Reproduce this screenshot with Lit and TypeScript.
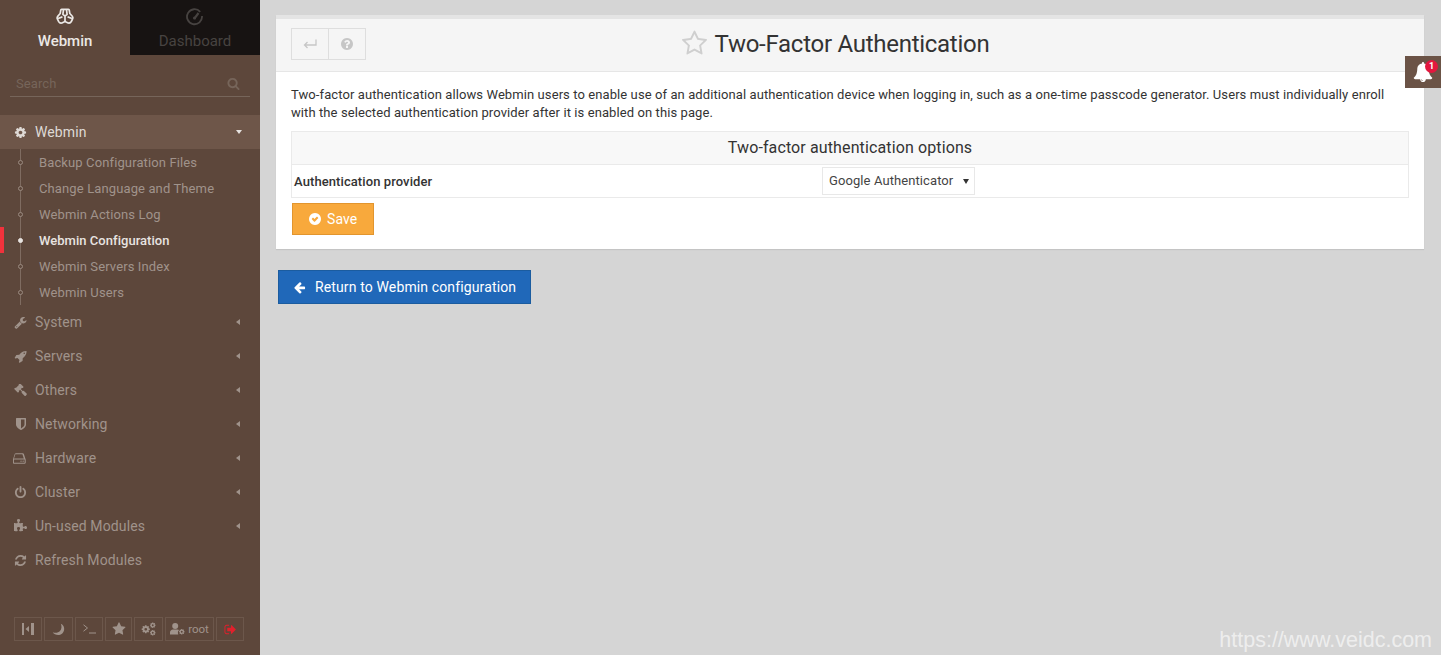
import { LitElement, html, css, svg } from "lit";
import { customElement } from "lit/decorators.js";

const P: Record<string, string> = {
  cog: "M1152 896q0-106-75-181t-181-75-181 75-75 181 75 181 181 75 181-75 75-181zm512-109v222q0 12-8 23t-20 13l-185 28q-19 54-39 91 35 50 107 138 10 12 10 25t-9 23q-27 37-99 108t-94 71q-12 0-26-9l-138-108q-44 23-91 38-16 136-29 186-7 28-36 28h-222q-14 0-24.500-8.500t-11.500-21.500l-28-184q-49-16-90-37l-141 107q-10 9-25 9-14 0-25-11-126-114-165-168-7-10-7-23 0-12 8-23 15-21 51-66.500t54-70.500q-27-50-41-99l-183-27q-13-2-21-12.500t-8-23.500v-222q0-12 8-23t19-13l186-28q14-46 39-92-40-57-107-138-10-12-10-24 0-10 9-23 26-36 98.500-107.500t94.500-71.500q13 0 26 10l138 107q44-23 91-38 16-136 29-186 7-28 36-28h222q14 0 24.500 8.500t11.500 21.500l28 184q49 16 90 37l142-107q9-9 24-9 13 0 25 10 129 119 165 170 7 8 7 22 0 12-8 23-15 21-51 66.500t-54 70.500q26 50 41 98l183 28q13 2 21 12.500t8 23.500z",
  wrench: "M448 1472q0-26-19-45t-45-19-45 19-19 45 19 45 45 19 45-19 19-45zm644-420l-682 682q-37 37-90 37-52 0-91-37l-106-108q-38-36-38-90 0-53 38-91l681-681q39 98 114.500 173.500t173.500 114.500zm634-435q0 39-23 106-47 134-164.500 217.500t-258.500 83.500q-185 0-316.500-131.500t-131.500-316.500 131.500-316.500 316.500-131.500q58 0 121.500 16.500t107.500 46.500q16 11 16 28t-16 28l-293 169v224l193 107q5-3 79-48.500t135.500-81 70.500-35.500q15 0 23.500 10t8.500 25z",
  rocket: "M1504 448q0-40-28-68t-68-28-68 28-28 68 28 68 68 28 68-28 28-68zm224-288q0 249-75.500 430.500t-253.500 360.500q-81 80-195 176l-20 379q-2 16-16 26l-384 224q-7 4-16 4-12 0-23-9l-64-64q-13-14-8-32l85-276-281-281-276 85q-3 1-9 1-14 0-23-9l-64-64q-17-19-5-39l224-384q10-14 26-16l379-20q96-114 176-195 188-187 358-258t431-71q14 0 24 9.500t10 22.500z",
  gavel: "M1771 1408q0 53-37 90l-107 108q-39 37-91 37-53 0-90-37l-363-364q-38-36-38-90 0-53 43-96l-256-256-126 126q-14 14-34 14t-34-14q2 2 12.500 12t12.500 13 10 11.500 10 13.500 6 13.500 5.500 16.500 1.500 18q0 38-28 68-3 3-16.500 18t-19 20.500-18.500 16.500-22 15.500-22 9-26 4.500q-40 0-68-28l-408-408q-28-28-28-68 0-13 4.500-26t9-22 15.500-22 16.500-18.500 20.500-19 18-16.500q30-28 68-28 10 0 18 1.500t16.500 5.500 13.500 6 13.500 10 11.500 10 13 12.500 12 12.500q-14-14-14-34t14-34l348-348q14-14 34-14t34 14q-2-2-12.500-12t-12.500-13-10-11.500-10-13.500-6-13.500-5.500-16.500-1.500-18q0-38 28-68 3-3 16.500-18t19-20.500 18.500-16.500 22-15.500 22-9 26-4.500q40 0 68 28l408 408q28 28 28 68 0 13-4.500 26t-9 22-15.500 22-16.500 18.500-20.500 19-18 16.500q-30 28-68 28-10 0-18-1.500t-16.500-5.500-13.500-6-13.500-10-11.500-10-13-12.500-12-12.500q14 14 14 34t-14 34l-126 126 256 256q43-43 96-43 52 0 91 37l363 363q37 39 37 91z",
  shield: "M1344 960v-640h-448v1137q119-63 213-137 235-184 235-360zm192-768v768q0 86-33.500 170.500t-83 150-118 127.500-126.500 103-121 77.500-89.500 49.500-42.500 20q-12 6-26 6t-26-6q-16-7-42.500-20t-89.500-49.500-121-77.500-126.500-103-118-127.500-83-150-33.500-170.500v-768q0-26 19-45t45-19h1152q26 0 45 19t19 45z",
  hdd: "M1040 1216q0 33-23.500 56.500t-56.500 23.500-56.500-23.500-23.500-56.500 23.500-56.500 56.500-23.500 56.500 23.500 23.500 56.500zm256 0q0 33-23.500 56.500t-56.500 23.500-56.500-23.500-23.500-56.500 23.500-56.500 56.500-23.500 56.500 23.500 23.500 56.500zm96 160v-320q0-13-9.500-22.500t-22.500-9.500h-1216q-13 0-22.500 9.500t-9.500 22.500v320q0 13 9.500 22.500t22.500 9.500h1216q13 0 22.500-9.500t9.500-22.500zm-1280-479h1180l-157-482q-4-13-16-21.500t-26-8.500h-782q-14 0-26 8.500t-16 21.500zm1408 159v320q0 66-47 113t-113 47h-1216q-66 0-113-47t-47-113v-320q0-25 16-75l197-606q17-53 63-86t101-33h782q55 0 101 33t63 86l197 606q16 50 16 75z",
  power: "M1664 896q0 156-61 298t-164 245-245 164-298 61-298-61-245-164-164-245-61-298q0-182 80.500-343t226.500-270q43-32 95.500-25t83.500 50q32 42 24.500 94.500t-49.500 84.500q-98 74-151.500 181t-53.500 228q0 104 40.500 198.500t109.500 163.500 163.500 109.500 198.500 40.500 198.500-40.500 163.500-109.500 109.500-163.500 40.500-198.500q0-121-53.500-228t-151.500-181q-42-32-49.500-84.500t24.500-94.500q31-43 84-50t95 25q146 109 226.500 270t80.500 343zm-640-768v640q0 52-38 90t-90 38-90-38-38-90v-640q0-52 38-90t90-38 90 38 38 90z",
  puzzle: "M1664 1098q0 81-44.500 135t-123.500 54q-41 0-77.500-17.500t-59-38-56.500-38-71-17.500q-110 0-110 124 0 39 16 115t15 115v5q-22 0-33 1-34 3-97.500 11.500t-115.500 13.500-98 5q-61 0-103-26.500t-42-83.500q0-37 17.500-71t38-56.500 38-59 17.500-77.500q0-79-54-123.500t-135-44.500q-84 0-143 45.500t-59 127.500q0 43 15 83t33.500 64.500 33.500 53 15 50.500q0 45-46 89-37 35-117 35-95 0-245-24-9-2-27.500-4t-27.500-4l-13-2q-1 0-3-1-2 0-2-1v-1024q2 1 17.500 3.500t34 5 21.500 3.500q150 24 245 24 80 0 117-35 46-44 46-89 0-22-15-50.500t-33.500-53-33.500-64.500-15-83q0-82 59-127.500t144-45.500q80 0 134 44.500t54 123.500q0 41-17.500 77.500t-38 59-38 56.500-17.500 71q0 57 42 83.500t103 26.500q64 0 180-15t163-17v2q-1 2-3.500 17.500t-5 34-3.500 21.500q-24 150-24 245 0 80 35 117 44 46 89 46 22 0 50.500-15t53-33.500 64.500-33.500 83-15q82 0 127.500 59t45.500 143z",
  refresh: "M1639 1056q0 5-1 7-64 268-268 434.500t-478 166.500q-146 0-282.500-55t-243.500-157l-129 129q-19 19-45 19t-45-19-19-45v-448q0-26 19-45t45-19h448q26 0 45 19t19 45-19 45l-137 137q71 66 161 102t187 36q134 0 250-65t186-179q11-17 53-117 8-23 30-23h192q13 0 22.500 9.500t9.500 22.500zm25-800v448q0 26-19 45t-45 19h-448q-26 0-45-19t-19-45 19-45l138-138q-148-137-349-137-134 0-250 65t-186 179q-11 17-53 117-8 23-30 23h-199q-13 0-22.500-9.500t-9.500-22.500v-7q65-268 270-434.500t480-166.500q146 0 284 55.500t245 156.500l130-129q19-19 45-19t45 19 19 45z",
  star: "M1728 647q0 22-26 48l-363 354 86 500q1 7 1 20 0 21-10.500 35.500t-30.500 14.500q-19 0-40-12l-449-236-449 236q-22 12-40 12-21 0-31.500-14.500t-10.500-35.500q0-6 2-20l86-500-364-354q-25-27-25-48 0-37 56-46l502-73 225-455q19-41 49-41t49 41l225 455 502 73q56 9 56 46z",
  starO: "M1201 1004l306-297-422-62-189-382-189 382-422 62 306 297-73 421 378-199 377 199zm527-357q0 22-26 48l-363 354 86 500q1 7 1 20 0 50-41 50-19 0-40-12l-449-236-449 236q-22 12-40 12-21 0-31.500-14.500t-10.500-35.500q0-6 2-20l86-500-364-354q-25-27-25-48 0-37 56-46l502-73 225-455q19-41 49-41t49 41l225 455 502 73q56 9 56 46z",
  search: "M1216 832q0-185-131.500-316.500t-316.500-131.500-316.500 131.500-131.500 316.500 131.500 316.500 316.500 131.500 316.500-131.500 131.500-316.500zm512 832q0 52-38 90t-90 38q-54 0-90-38l-343-342q-179 124-399 124-143 0-273.500-55.500t-225-150-150-225-55.500-273.500 55.500-273.500 150-225 225-150 273.500-55.500 273.500 55.500 225 150 150 225 55.500 273.500q0 220-124 399l343 343q37 37 37 90z",
  question: "M1024 1376v-192q0-14-9-23t-23-9h-192q-14 0-23 9t-9 23v192q0 14 9 23t23 9h192q14 0 23-9t9-23zm256-672q0-88-55.500-163t-138.500-116-170-41q-243 0-371 213-15 24 8 42l132 100q7 6 19 6 16 0 25-12 53-68 86-92 34-24 86-24 48 0 85.500 26t37.500 59q0 38-20 61t-68 45q-63 28-115.500 86.500t-52.500 125.500v36q0 14 9 23t23 9h192q14 0 23-9t9-23q0-19 21.500-49.500t54.500-49.500q32-18 49-28.500t46-35 44.500-48 28-60.500 12.500-81zm384 192q0 209-103 385.500t-279.500 279.500-385.500 103-385.500-103-279.500-279.500-103-385.500 103-385.500 279.500-279.500 385.500-103 385.500 103 279.500 279.500 103 385.500z",
  check: "M1299 813l-422 422q-19 19-45 19t-45-19l-294-294q-19-19-19-45t19-45l102-102q19-19 45-19t45 19l147 147 275-275q19-19 45-19t45 19l102 102q19 19 19 45t-19 45zm365 83q0 209-103 385.500t-279.500 279.500-385.500 103-385.500-103-279.500-279.500-103-385.500 103-385.500 279.500-279.500 385.500-103 385.500 103 279.500 279.500 103 385.500z",
  arrowLeft: "M1664 896v128q0 53-32.500 90.500t-84.500 37.500h-704l293 294q38 36 38 90t-38 90l-75 76q-37 37-90 37-52 0-91-37l-651-652q-37-37-37-90 0-52 37-91l651-650q38-38 91-38 52 0 90 38l75 74q38 38 38 91t-38 91l-293 293h704q52 0 84.500 37.500t32.500 90.500z",
  bell: "M912 1696q0-16-16-16-59 0-101.500-42.500t-42.500-101.500q0-16-16-16t-16 16q0 73 51.500 124.500t124.500 51.500q16 0 16-16zm816-288q0 52-38 90t-90 38h-448q0 106-75 181t-181 75-181-75-75-181h-448q-52 0-90-38t-38-90q50-42 91-88t85-119.500 74.500-158.500 50-206 19.500-260q0-152 117-282.500t307-158.500q-8-19-8-39 0-40 28-68t68-28 68 28 28 68q0 20-8 39 190 28 307 158.500t117 282.500q0 139 19.500 260t50 206 74.500 158.500 85 119.500 91 88z",
  signOut: "M704 1440q0 4 1 20t.5 26.500-3 23.500-10 19.500-20.500 6.500h-320q-119 0-203.500-84.500t-84.500-203.500v-704q0-119 84.500-203.500t203.500-84.500h320q13 0 22.500 9.500t9.500 22.500q0 4 1 20t.5 26.500-3 23.500-10 19.500-20.500 6.500h-320q-66 0-113 47t-47 113v704q0 66 47 113t113 47h312l11.500 1 11.500 3 8 5.500 7 9 2 13.500zm928-544q0 26-19 45l-544 544q-19 19-45 19t-45-19-19-45v-288h-448q-26 0-45-19t-19-45v-384q0-26 19-45t45-19h448v-288q0-26 19-45t45-19 45 19l544 544q19 19 19 45z",
};

const ic = (name: string, size: number, cls = "") =>
  html`<svg class="ic ${cls}" width=${size} height=${size} viewBox="0 0 1792 1792" fill="currentColor"><path d=${P[name]}></path></svg>`;

const webminLogo = html`<svg class="ic" width="18" height="18" viewBox="0 0 18 18" fill="none" stroke="currentColor" stroke-width="1.700" stroke-linejoin="round">
  <path d="M5.600 1.400h6.800c.5 0 .9.4.9 1l.5 3.100 2.300 2.500c.9 1 .9 2.400.2 3.500l-1 2c-.6 1.100-2 1.700-3.200 1.400L9 13.400 5.900 15c-1.200.3-2.600-.3-3.200-1.400l-1-2c-.7-1.100-.7-2.500.2-3.500l2.300-2.600.5-3.100c.1-.6.4-1 .9-1z"></path>
  <path d="M7.500 1.600 6.900 6.400 9 8.200l2.100-1.800-.6-4.800M9 8.200v5M2 10.500l4.400-1.600M16 10.500l-4.400-1.600"></path>
</svg>`;

const dashIcon = html`<svg class="ic" width="18" height="18" viewBox="0 0 18 18" fill="none" stroke="currentColor" stroke-width="1.800">
  <path d="M14.200 3.800A7.500 7.500 0 1 0 16 8"></path>
  <path d="M8.200 10.800 12.500 5" stroke-width="2.200"></path>
  <circle cx="8.500" cy="10" r="1.500" fill="currentColor" stroke="none"></circle>
</svg>`;

const backIcon = html`<svg class="ic" width="14" height="10" viewBox="0 0 14 10" fill="none" stroke="currentColor" stroke-width="1.300">
  <path d="M13 .5v5.500H1.500M4.500 3 1.500 6l3 3"></path>
</svg>`;

const collapseIcon = html`<svg class="ic" width="12" height="12" viewBox="0 0 12 12" fill="currentColor">
  <rect x="0" y="0" width="2" height="12"></rect><rect x="9" y="0" width="3" height="12"></rect><path d="M7 3v6L3.500 6z"></path>
</svg>`;

const moonIcon = html`<svg class="ic" width="13" height="13" viewBox="0 0 13 13" fill="currentColor">
  <path d="M8.800.8c2.500 1.200 3.800 3.400 3.300 6.200C11.600 10 9 12 6.200 12 3.800 12 1.800 11 .7 9.200c2.700 1 5.600.6 7.300-1.200C9.700 6.200 10 3.300 8.800.8z"></path>
</svg>`;

const termIcon = html`<svg class="ic" width="13" height="10" viewBox="0 0 13 10" fill="none" stroke="currentColor" stroke-width="1">
  <path d="M.5.800 4.500 4 .5 7.200M6 9h7"></path>
</svg>`;

const cogsIcon = html`<svg class="ic" width="15" height="14" viewBox="0 0 15 14" fill="currentColor">
  ${svg`<svg x="0" y="2.500" width="9.500" height="9.500" viewBox="0 0 1792 1792"><path d=${P.cog}></path></svg>
  <svg x="8.500" y="0" width="6.500" height="6.500" viewBox="0 0 1792 1792"><path d=${P.cog}></path></svg>
  <svg x="8.500" y="7.500" width="6.500" height="6.500" viewBox="0 0 1792 1792"><path d=${P.cog}></path></svg>`}
</svg>`;

const userCogIcon = html`<svg class="ic" width="15" height="12" viewBox="0 0 15 12" fill="currentColor">
  <circle cx="5.200" cy="3" r="3"></circle>
  <path d="M0 11.500V9.500C0 7.700 1.200 6.400 3 6.400h4.200c.8 0 1.400.2 2 .6-1.200.6-1.700 2.400-.9 4.500z"></path>
  ${svg`<svg x="8.500" y="5.500" width="6.500" height="6.500" viewBox="0 0 1792 1792"><path d=${P.cog}></path></svg>`}
</svg>`;

const SUBS = [
  "Backup Configuration Files",
  "Change Language and Theme",
  "Webmin Actions Log",
  "Webmin Configuration",
  "Webmin Servers Index",
  "Webmin Users",
];
const MENU: [string, string, boolean, number][] = [
  ["wrench", "System", true, 13],
  ["rocket", "Servers", true, 13],
  ["gavel", "Others", true, 13],
  ["shield", "Networking", true, 14],
  ["hdd", "Hardware", true, 15],
  ["power", "Cluster", true, 13],
  ["puzzle", "Un-used Modules", true, 14],
  ["refresh", "Refresh Modules", false, 13],
];

@customElement("app-root")
export class AppRoot extends LitElement {
  static styles = css`
    :host {
      display: flex;
      height: 655px;
      overflow: hidden;
      background: #d5d5d5;
      font-family: Roboto, "Liberation Sans", sans-serif;
      color: #333;
      position: relative;
    }
    .ic { display: block; flex: none; }
    .eo { fill-rule: evenodd; }

    /* sidebar */
    .side {
      width: 260px;
      flex: none;
      background: #5d473b;
      display: flex;
      flex-direction: column;
      color: #a0938b;
    }
    .tabs { display: flex; height: 55px; }
    .tab {
      width: 130px;
      display: flex;
      flex-direction: column;
      align-items: center;
      padding-top: 8px;
      box-sizing: border-box;
      font-size: 15px;
      line-height: 18px;
      gap: 6px;
    }
    .tab.on { color: #ebe8e5; font-weight: 500; }
    .tab.off { background: #171312; color: #474341; }
    .search {
      margin: 16px 10px 0;
      height: 26px;
      box-sizing: border-box;
      padding: 0 10px 1px 6px;
      border-bottom: 1px solid #76655a;
      display: flex;
      align-items: center;
      color: #76655a;
    }
    .search input {
      flex: 1;
      min-width: 0;
      border: 0;
      padding: 0;
      background: none;
      outline: 0;
      font: 13px Roboto, sans-serif;
      letter-spacing: .1px;
      color: #76655a;
    }
    .search input::placeholder { color: #76655a; opacity: 1; }
    .menu { margin-top: 18px; }
    .row {
      height: 34px;
      display: flex;
      align-items: center;
      padding: 0 20px 0 14px;
      font-size: 14px;
      letter-spacing: .12px;
    }
    .row .i { width: 13px; display: flex; justify-content: center; margin-right: 8px; }
    .row .lbl { flex: 1; }
    .row.open { background: #6e5649; color: #dfdad6; }
    .caret-l {
      width: 0; height: 0;
      border-style: solid;
      border-width: 3.500px 4px 3.500px 0;
      border-color: transparent currentColor transparent transparent;
    }
    .caret-d {
      width: 0; height: 0;
      border-style: solid;
      border-width: 4px 3px 0;
      border-color: #e6e2df transparent transparent;
      margin-right: -2px;
    }
    .subs { position: relative; }
    .subs::before {
      content: "";
      position: absolute;
      left: 20px; top: 0; bottom: 0;
      width: 1px;
      background: #7f6c61;
    }
    .sub {
      position: relative;
      height: 26px;
      line-height: 28px;
      padding-left: 39px;
      font-size: 13px;
      letter-spacing: .12px;
      color: #a0938b;
    }
    .sub::before {
      content: "";
      position: absolute;
      left: 18px; top: 11px;
      width: 3px; height: 3px;
      border: 1px solid #9a8a80;
      border-radius: 50%;
      background: #5d473b;
    }
    .sub.on { color: #e8e4e1; font-weight: 500; letter-spacing: .03px; }
    .sub.on::before { background: #e8e4e1; border-color: #e8e4e1; }
    .sub.on::after {
      content: "";
      position: absolute;
      left: 0; top: 0;
      width: 4px; height: 26px;
      background: #f0323c;
    }
    .foot {
      margin-top: auto;
      padding: 0 0 14px 14px;
      display: flex;
      gap: 2px;
    }
    .fb {
      height: 24px;
      box-sizing: border-box;
      border: 1px solid #6c574b;
      display: flex;
      align-items: center;
      justify-content: center;
      gap: 3px;
      font-size: 11.500px;
      color: #a0938b;
    }
    .fb.red { color: #e0202c; }

    /* main */
    .main { flex: 1; min-width: 0; padding: 15px 17px 0 16px; }
    .panel {
      background: #fff;
      border-top: 4px solid #e4e4e4;
      box-shadow: 0 1px 1px rgba(0,0,0,.08);
      padding-bottom: 14px;
    }
    .head {
      height: 52px;
      background: #f5f5f5;
      border-bottom: 1px solid #e6e6e6;
      display: flex;
      align-items: center;
      justify-content: center;
      padding-right: 30px;
      position: relative;
    }
    .hbtns {
      position: absolute;
      left: 15px; top: 9px;
      display: flex;
      color: #c6c6c6;
    }
    .hb {
      height: 32px;
      box-sizing: border-box;
      border: 1px solid #dedede;
      display: flex;
      align-items: center;
      justify-content: center;
    }
    .hb.a { width: 38px; }
    .hb.b { width: 38px; margin-left: -1px; }
    .title {
      display: flex;
      align-items: center;
      gap: 7px;
      font-size: 24px;
      font-weight: 400;
      letter-spacing: -.27px;
      color: #333;
      margin: 0 0 3px 0;
    }
    .star { color: #cfcfcf; }
    .body { padding: 14px 15px 0; letter-spacing: .09px; }
    .desc { margin: 0; font-size: 13px; line-height: 18px; color: #333; }
    .tbl { margin-top: 9px; border: 1px solid #eaeaea; }
    .th {
      height: 32px;
      background: #f8f8f8;
      border-bottom: 1px solid #eaeaea;
      text-align: center;
      font-size: 16px;
      letter-spacing: .12px;
      line-height: 31px;
      color: #333;
    }
    .tr { height: 32px; display: flex; align-items: center; padding-left: 2px; }
    .tr .k { width: 528px; font-size: 13px; font-weight: 500; color: #333; margin-top: 1px; }
    .sel {
      position: relative;
      width: 153px;
      height: 28px;
      box-sizing: border-box;
      border: 1px solid #e8e8e8;
      font-size: 13px;
      color: #444;
      display: flex;
      align-items: center;
      padding: 0 0 2px 6px;
      background: #fff;
    }
    .sel::after {
      content: "";
      position: absolute;
      right: 5px; top: 11px;
      border-style: solid;
      border-width: 5px 3.500px 0;
      border-color: #333 transparent transparent;
    }
    .save {
      margin: 5px 0 0 1px;
      width: 82px;
      height: 32px;
      box-sizing: border-box;
      background: #f8a93c;
      border: 1px solid #e2952e;
      color: #fff;
      display: flex;
      align-items: center;
      padding-left: 15px;
      gap: 5px;
      font-size: 14px;
    }
    .ret {
      margin: 21px 0 0 2px;
      width: 253px;
      height: 34px;
      box-sizing: border-box;
      background: #2068b9;
      border: 1px solid #1b5c9f;
      color: #fff;
      display: flex;
      align-items: center;
      padding-left: 14px;
      gap: 9px;
      font-size: 14px;
      letter-spacing: .13px;
    }

    /* overlays */
    .bell {
      position: absolute;
      right: 0; top: 56px;
      width: 36px; height: 32px;
      background: #6b5346;
      color: #fff;
      display: flex;
      align-items: center;
      justify-content: center;
    }
    .badge {
      position: absolute;
      right: 3px; top: 4px;
      width: 13px; height: 13px;
      border-radius: 50%;
      background: #e3173e;
      color: #fff;
      font-size: 9px;
      font-weight: 700;
      line-height: 13px;
      text-align: center;
    }
    .mark {
      position: absolute;
      right: 9px; bottom: 3px;
      font-family: "Liberation Sans", Arial, sans-serif;
      font-size: 21.500px;
      line-height: 24px;
      color: rgba(255,255,255,.62);
    }
  `;

  render() {
    const footBtns = [
      { w: 28, c: collapseIcon },
      { w: 29, c: moonIcon },
      { w: 28, c: termIcon },
      { w: 27, c: ic("star", 14) },
      { w: 29, c: cogsIcon },
    ];
    return html`
      <aside class="side">
        <div class="tabs">
          <div class="tab on">${webminLogo}<span>Webmin</span></div>
          <div class="tab off">${dashIcon}<span>Dashboard</span></div>
        </div>
        <div class="search">
          <input placeholder="Search" aria-label="Search" />
          ${ic("search", 13)}
        </div>
        <nav class="menu">
          <div class="row open">
            <span class="i">${ic("cog", 13)}</span>
            <span class="lbl">Webmin</span>
            <span class="caret-d"></span>
          </div>
          <div class="subs">
            ${SUBS.map(
              (s) => html`<div class="sub ${s === "Webmin Configuration" ? "on" : ""}">${s}</div>`
            )}
          </div>
          ${MENU.map(
            ([i, l, c, z]) => html`<div class="row">
              <span class="i">${ic(i, z)}</span>
              <span class="lbl">${l}</span>
              ${c ? html`<span class="caret-l"></span>` : ""}
            </div>`
          )}
        </nav>
        <div class="foot">
          ${footBtns.map((b) => html`<div class="fb" style="width:${b.w}px">${b.c}</div>`)}
          <div class="fb" style="width:49px">${userCogIcon}<span>root</span></div>
          <div class="fb red" style="width:28px">${ic("signOut", 13)}</div>
        </div>
      </aside>
      <main class="main">
        <section class="panel">
          <header class="head">
            <div class="hbtns">
              <div class="hb a">${backIcon}</div>
              <div class="hb b">${ic("question", 14)}</div>
            </div>
            <h1 class="title"><span class="star">${ic("starO", 27)}</span>Two-Factor Authentication</h1>
          </header>
          <div class="body">
            <p class="desc">
              Two-factor authentication allows Webmin users to enable use of an additional authentication device when logging in, such as a one-time passcode generator. Users must individually enroll with the selected authentication provider after it is enabled on this page.
            </p>
            <div class="tbl">
              <div class="th">Two-factor authentication options</div>
              <div class="tr">
                <div class="k">Authentication provider</div>
                <div class="sel">Google Authenticator</div>
              </div>
            </div>
            <div class="save">${ic("check", 14, "eo")}<span>Save</span></div>
          </div>
        </section>
        <div class="ret">${ic("arrowLeft", 13)}<span>Return to Webmin configuration</span></div>
      </main>
      <div class="bell">${ic("bell", 20)}<span class="badge">1</span></div>
      <div class="mark">https://www.veidc.com</div>
    `;
  }
}
